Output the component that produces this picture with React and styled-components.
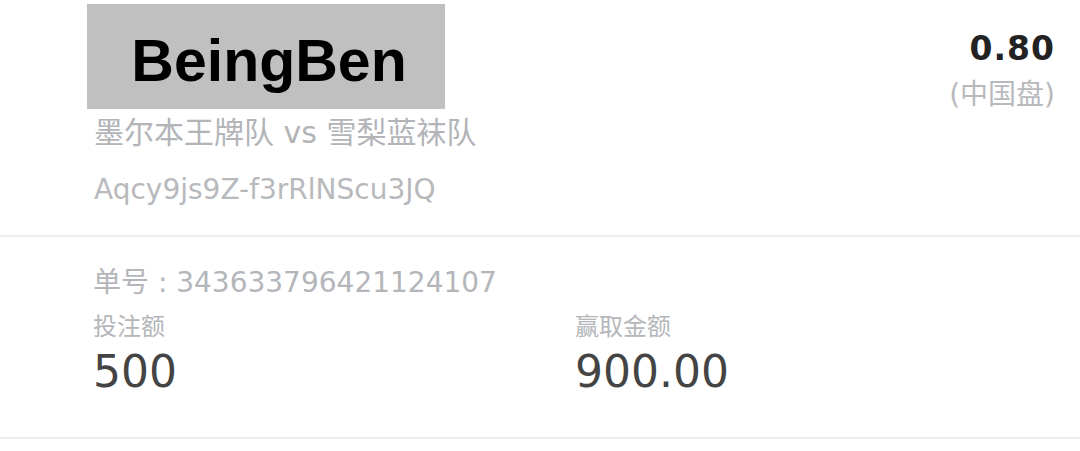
import React from 'react';
import styled, { createGlobalStyle } from 'styled-components';

const GlobalStyle = createGlobalStyle`
  body {
    margin: 0;
    background: #fff;
    font-family: "DejaVu Sans", "Noto Sans CJK SC", sans-serif;
  }
`

const Card = styled.div`
  width: 1080px;
  background: #fff;
`

const Header = styled.div`
  display: flex;
  justify-content: space-between;
  align-items: flex-start;
  padding: 4px 25px 0 87px;
  height: 235px;
  box-sizing: border-box;
`

const MatchInfo = styled.div`
  display: flex;
  flex-direction: column;
`

const NameBadge = styled.div`
  width: 358px;
  height: 105px;
  box-sizing: border-box;
  padding: 8px 0 0 6px;
  background: #c0c0c0;
  display: flex;
  align-items: center;
  justify-content: center;
  font-family: "Liberation Sans", Arial, sans-serif;
  font-weight: 700;
  font-size: 59px;
  color: #000;
`

const Teams = styled.div`
  margin: 6px 0 0 7px;
  font-size: 30px;
  line-height: 36px;
  color: #b2b4b8;
`

const Code = styled.div`
  margin: 21px 0 0 7px;
  font-size: 28px;
  line-height: 36px;
  color: #b8b9bc;
`

const Odds = styled.div`
  display: flex;
  flex-direction: column;
  align-items: flex-end;
  padding-top: 26px;
`

const OddsValue = styled.div`
  font-weight: 700;
  font-size: 33px;
  line-height: 38px;
  letter-spacing: 1px;
  color: #222;
`

const OddsType = styled.div`
  margin-top: 10px;
  font-size: 28px;
  line-height: 34px;
  color: #b8b9bc;
`

const Divider = styled.div`
  height: 2px;
  background: #ececec;
`

const Details = styled.div`
  display: grid;
  grid-template-columns: 482px 1fr;
  align-content: start;
  padding: 28px 0 0 93px;
  height: 200px;
  box-sizing: border-box;
`

const OrderNo = styled.div`
  grid-column: 1 / -1;
  font-size: 28px;
  line-height: 36px;
  color: #b4b6ba;
`

const Field = styled.div`
  display: flex;
  flex-direction: column;
  margin-top: 11px;
`

const Label = styled.div`
  font-size: 24px;
  line-height: 30px;
  color: #b4b6ba;
`

const Amount = styled.div`
  margin-top: 5px;
  font-size: 44px;
  line-height: 50px;
  color: #444;
`

export default function App() {
  return (
    <Card>
      <GlobalStyle />
      <Header>
        <MatchInfo>
          <NameBadge>BeingBen</NameBadge>
          <Teams>墨尔本王牌队 vs 雪梨蓝袜队</Teams>
          <Code>Aqcy9js9Z-f3rRlNScu3JQ</Code>
        </MatchInfo>
        <Odds>
          <OddsValue>0.80</OddsValue>
          <OddsType>(中国盘)</OddsType>
        </Odds>
      </Header>
      <Divider />
      <Details>
        <OrderNo>单号 : 343633796421124107</OrderNo>
        <Field>
          <Label>投注额</Label>
          <Amount>500</Amount>
        </Field>
        <Field>
          <Label>赢取金额</Label>
          <Amount>900.00</Amount>
        </Field>
      </Details>
      <Divider />
    </Card>
  );
}
